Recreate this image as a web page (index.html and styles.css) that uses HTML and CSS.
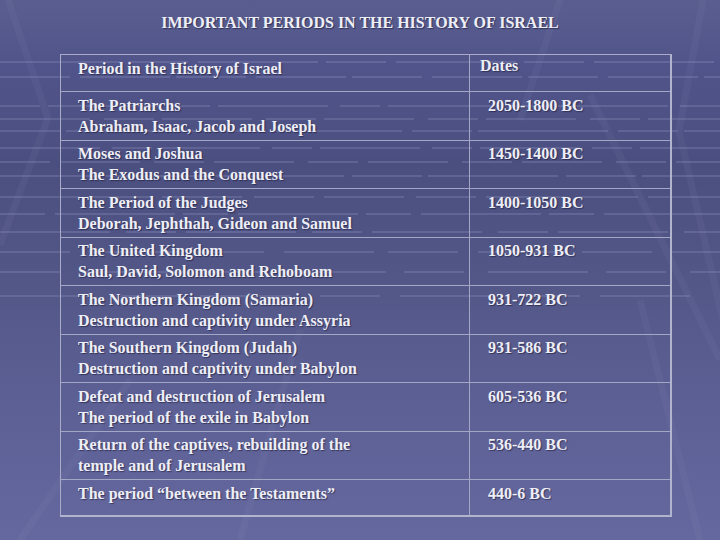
FILE: index.html
```html
<!DOCTYPE html>
<html lang="en">
<head>
<meta charset="utf-8">
<title>Important Periods in the History of Israel</title>
<link rel="stylesheet" href="styles.css">
</head>
<body>
<div class="slide">
  <svg class="backdrop" viewBox="0 0 720 540" width="720" height="540" aria-hidden="true">
    <g class="stripes">
      <line x1="0" y1="62" x2="720" y2="62" stroke-dasharray="120 8 60 10"/>
      <line x1="0" y1="77" x2="720" y2="77" stroke-dasharray="70 10 90 6"/>
      <line x1="0" y1="106" x2="720" y2="106" stroke-dasharray="40 8 110 12"/>
      <line x1="0" y1="119" x2="720" y2="119" stroke-dasharray="90 14 50 8"/>
      <line x1="0" y1="131" x2="720" y2="131" stroke-dasharray="60 6 130 10"/>
      <line x1="0" y1="148" x2="720" y2="148" stroke-dasharray="100 12 40 8"/>
      <line x1="0" y1="162" x2="720" y2="162" stroke-dasharray="50 10 80 14"/>
      <line x1="0" y1="176" x2="720" y2="176" stroke-dasharray="130 8 70 6"/>
      <line x1="0" y1="197" x2="720" y2="197" stroke-dasharray="80 12 60 10"/>
      <line x1="0" y1="214" x2="720" y2="214" stroke-dasharray="45 10 120 8"/>
      <line x1="0" y1="232" x2="720" y2="232" stroke-dasharray="110 16 50 10"/>
      <line x1="0" y1="252" x2="720" y2="252" stroke-dasharray="70 20 90 14"/>
      <line x1="0" y1="272" x2="720" y2="272" stroke-dasharray="60 24 100 18"/>
      <line x1="0" y1="296" x2="720" y2="296" stroke-dasharray="90 30 60 20"/>
    </g>
    <g class="streaks">
      <line x1="8" y1="0" x2="48" y2="118"/>
      <line x1="48" y1="118" x2="0" y2="245"/>
      <line x1="130" y1="380" x2="20" y2="540"/>
      <line x1="703" y1="0" x2="679" y2="131"/>
      <line x1="679" y1="131" x2="730" y2="350"/>
      <line x1="590" y1="95" x2="720" y2="360"/>
      <line x1="560" y1="0" x2="520" y2="120"/>
      <line x1="640" y1="300" x2="700" y2="540"/>
      <line x1="300" y1="330" x2="240" y2="540"/>
    </g>
  </svg>

  <h1 class="title">IMPORTANT PERIODS IN THE HISTORY OF ISRAEL</h1>

  <div class="table">
    <div class="cell name head">Period in the History of Israel</div>
    <div class="cell date head">Dates</div>

    <div class="cell name">The Patriarchs<br>Abraham, Isaac, Jacob and Joseph</div>
    <div class="cell date">2050-1800 BC</div>

    <div class="cell name">Moses and Joshua<br>The Exodus and the Conquest</div>
    <div class="cell date">1450-1400 BC</div>

    <div class="cell name">The Period of the Judges<br>Deborah, Jephthah, Gideon and Samuel</div>
    <div class="cell date">1400-1050 BC</div>

    <div class="cell name">The United Kingdom<br>Saul, David, Solomon and Rehoboam</div>
    <div class="cell date">1050-931 BC</div>

    <div class="cell name">The Northern Kingdom (Samaria)<br>Destruction and captivity under Assyria</div>
    <div class="cell date">931-722 BC</div>

    <div class="cell name">The Southern Kingdom (Judah)<br>Destruction and captivity under Babylon</div>
    <div class="cell date">931-586 BC</div>

    <div class="cell name">Defeat and destruction of Jerusalem<br>The period of the exile in Babylon</div>
    <div class="cell date">605-536 BC</div>

    <div class="cell name">Return of the captives, rebuilding of the<br>temple and of Jerusalem</div>
    <div class="cell date">536-440 BC</div>

    <div class="cell name last">The period “between the Testaments”</div>
    <div class="cell date last">440-6 BC</div>
  </div>
</div>
</body>
</html>
```

FILE: styles.css
```css
html, body {
  margin: 0;
  padding: 0;
}

body {
  width: 720px;
  height: 540px;
  overflow: hidden;
  font-family: "Liberation Serif", "Times New Roman", serif;
  font-weight: bold;
  font-size: 16px;
  color: #eeeef6;
}

.slide {
  position: relative;
  width: 720px;
  height: 540px;
  background: linear-gradient(to bottom,
    #5a5e8f 0%,
    #50548a 12%,
    #4b4f80 30%,
    #545889 55%,
    #5e6196 78%,
    #65689e 100%);
}

.backdrop {
  position: absolute;
  left: 0;
  top: 0;
  z-index: 0;
}

.stripes line {
  stroke: #8e91bd;
  stroke-width: 2;
  opacity: 0.3;
}

.streaks line {
  stroke: #9a9cc8;
  stroke-width: 7;
  opacity: 0.08;
}

.title {
  position: relative;
  z-index: 1;
  margin: 0;
  height: 54px;
  box-sizing: border-box;
  padding-top: 12px;
  font-size: 16px;
  line-height: 21px;
  font-weight: bold;
  text-align: center;
  text-shadow: 1px 1px 1px rgba(20, 20, 50, 0.55);
}

.table {
  position: relative;
  z-index: 1;
  margin-left: 60px;
  width: 612px;
  box-sizing: border-box;
  display: grid;
  grid-template-columns: 408px 1fr;
  grid-template-rows: 37px repeat(8, 48.5px) 35px;
  border-top: 1px solid #a9abc9;
  border-left: 1px solid #a9abc9;
  border-right: 2px solid #b2b4ce;
  border-bottom: 2px solid #b2b4ce;
}

.cell {
  box-sizing: border-box;
  border-bottom: 1px solid #a4a6c6;
  line-height: 21px;
  padding-top: 2.5px;
  text-shadow: 1px 1px 1px rgba(20, 20, 50, 0.55);
  white-space: nowrap;
}

.cell.last {
  border-bottom: none;
}

.name {
  padding-left: 17px;
}

.date {
  border-left: 1px solid #a4a6c6;
  padding-left: 18px;
}

.name.head {
  padding-top: 3px;
}

.date.head {
  padding-top: 0;
  padding-left: 10px;
}
```
